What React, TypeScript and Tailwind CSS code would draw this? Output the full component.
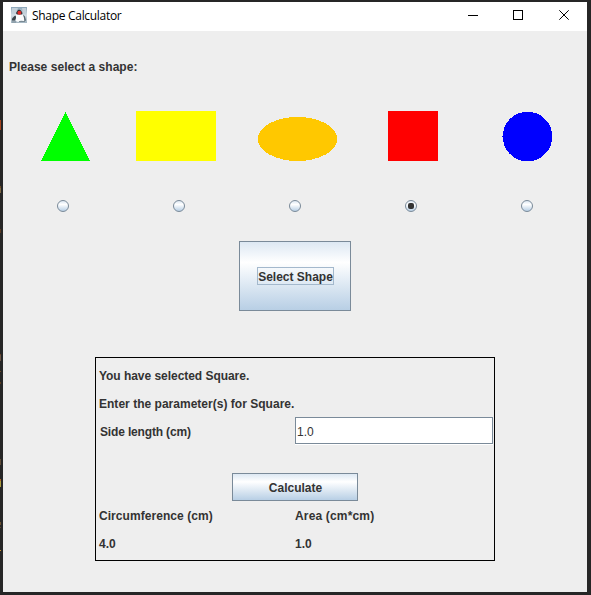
import React from "react";

const edgeMarks = [
  "mt-[118px] h-[10px] bg-[#a5431d]",
  "mt-[56px] h-[2px] bg-[#6b4a26]",
  "h-[5px] bg-[#7d6844]",
  "mt-[36px] h-[4px] bg-[#5a3a22]",
  "mt-[121px] h-[1px] bg-[#6b3d22]",
  "h-[6px] bg-[#6b5546]",
  "mt-[10px] h-[1px] bg-[#6b4a26]",
  "mt-[10px] h-[2px] bg-[#5a3a1e]",
  "mt-[75px] h-[6px] bg-[#5f4c38]",
  "mt-[14px] h-[2px] bg-[#a8642a]",
  "h-[6px] bg-[#a89a3c]",
  "mt-[35px] h-[3px] bg-[#6b5030]",
  "mt-[2px] h-[1px] bg-[#5a4630]",
  "mt-[22px] h-[1px] bg-[#c9922e]",
];

function Radio({ checked = false }: { checked?: boolean }) {
  return (
    <button
      role="radio"
      aria-checked={checked}
      className="flex size-3 items-center justify-center rounded-full border border-[#7a8a99] bg-linear-to-b from-[#dde8f3] via-white via-35% to-[#b8cfe5]"
    >
      {checked && <span className="size-[6px] rounded-[2px] bg-[#333333]" />}
    </button>
  );
}

function DukeIcon() {
  return (
    <svg className="mb-[3px]" width="16" height="16" viewBox="0 0 16 16">
      <defs>
        <linearGradient id="tile" x1="0" y1="0" x2="0" y2="1">
          <stop offset="0" stopColor="#8ba5b8" />
          <stop offset="0.5" stopColor="#d3dde4" />
          <stop offset="1" stopColor="#a3b5c1" />
        </linearGradient>
      </defs>
      <rect width="16" height="16" fill="url(#tile)" />
      <path d="M1 1h6L4 7H1zM11 1h4v7l-3-2z" fill="#c3d0d9" />
      <path d="M6.5 3.5L8 2.5L10 3.5L11.5 6L11 8H6L5 6z" fill="#2a3238" />
      <path d="M4.5 7.5H11.5L13 10V14L10 13.5L7 15L5 14L4 10z" fill="#fafbfc" />
      <path d="M1 11.5L3.5 9L4.8 8.5L5 11L4 13.5L1 13.5z" fill="#3b444b" />
      <path d="M12 7.5L14 9.5L15 13.5L13.5 14L13 11z" fill="#56636d" />
      <circle cx="8.4" cy="5.8" r="2" fill="#e22d2a" />
      <path d="M8 14.5h6M1 15h4" stroke="#6d7d88" strokeWidth="0.8" />
    </svg>
  );
}

function Cell({ children }: { children: React.ReactNode }) {
  return <div className="flex h-7 items-center whitespace-nowrap">{children}</div>;
}

export default function App() {
  return (
    <div className="flex h-[595px] w-[591px] overflow-hidden bg-[#262626] pt-[2px] font-['Liberation_Sans',Arial,sans-serif] text-[12px] leading-[14px] font-bold text-[#333333]">
      <div className="flex w-[3px] shrink-0 flex-col">
        {edgeMarks.map((mark) => (
          <div key={mark} className={`w-px shrink-0 ${mark}`} />
        ))}
      </div>

      <div className="flex h-[590px] w-[584px] shrink-0 flex-col bg-[#eeeeee]">
        <header className="flex h-[29px] shrink-0 items-center bg-white pl-2 text-black">
          <DukeIcon />
          <span className="mb-px ml-[5px] font-['Open_Sans',sans-serif] text-[12px] font-normal tracking-[-0.3px]">
            Shape Calculator
          </span>
          <svg className="ml-auto" width="138" height="29" fill="none" stroke="#000" shapeRendering="crispEdges">
            <path d="M19 13.5h10" />
            <rect x="64.5" y="8.5" width="9" height="9" />
            <path d="M110.3 8.3l9.4 9.4M119.7 8.3l-9.4 9.4" shapeRendering="auto" />
          </svg>
        </header>

        <main className="flex flex-col">
          <p className="mt-[29px] ml-[6px] tracking-[0.05px]">Please select a shape:</p>

          <svg className="mt-[36px] ml-[2px]" width="580" height="51" shapeRendering="crispEdges">
            <path d="M60.5 2L85 51H36z" fill="#00ff00" />
            <rect x="131" y="1" width="80" height="50" fill="#ffff00" />
            <ellipse cx="292.5" cy="29" rx="39.7" ry="22" fill="#ffc800" />
            <rect x="383" y="1" width="50" height="50" fill="#ff0000" />
            <circle cx="522.5" cy="26.5" r="24.8" fill="#0000ff" />
            <path d="M497 26h1v1h-1z" fill="#0000ff" />
          </svg>

          <div role="radiogroup" className="mx-[2px] mt-[39px] grid grid-cols-5 justify-items-center">
            <Radio />
            <Radio />
            <Radio />
            <Radio checked />
            <Radio />
          </div>

          <button className="mt-[29px] flex h-[70px] w-[112px] items-center justify-center self-center border border-[#7a8a99] bg-linear-to-b from-[#dde8f3] via-white via-30% to-[#b8cfe5]">
            <span className="flex h-[18px] w-[77px] items-center justify-center border border-[#a3b8cc] pt-[2px] pl-px whitespace-nowrap">
              Select Shape
            </span>
          </button>

          <section className="mt-[46px] ml-[92px] h-[204px] w-[400px] border border-black pt-1">
            <div className="pl-[3px]">
              <Cell>
                <span className="tracking-[-0.04px]">You have selected Square.</span>
              </Cell>
              <Cell>
                <span className="tracking-[0.02px]">Enter the parameter(s) for Square.</span>
              </Cell>
            </div>
            <div className="flex h-7 items-start">
              <label className="mt-[7px] w-[199px] pl-1 tracking-[-0.16px]">Side length (cm)</label>
              <input
                className="-mt-px h-[27px] w-[198px] border border-[#7a8a99] bg-white pt-[2px] pl-[1px] font-normal shadow-[0_1px_0_#fff] outline-none"
                defaultValue="1.0"
              />
            </div>
            <div className="mt-[27px] flex justify-center">
              <button className="h-7 w-[126px] border border-[#7a8a99] bg-linear-to-b from-[#dde8f3] via-white via-30% to-[#b8cfe5] pt-[2px] pl-px">
                Calculate
              </button>
            </div>
            <div className="mt-px grid grid-cols-[196px_1fr] pl-[3px]">
              <Cell>
                <span className="tracking-[0.06px]">Circumference (cm)</span>
              </Cell>
              <Cell>
                <span className="tracking-[0.16px]">Area (cm*cm)</span>
              </Cell>
              <Cell>4.0</Cell>
              <Cell>1.0</Cell>
            </div>
          </section>
        </main>
      </div>
    </div>
  );
}
